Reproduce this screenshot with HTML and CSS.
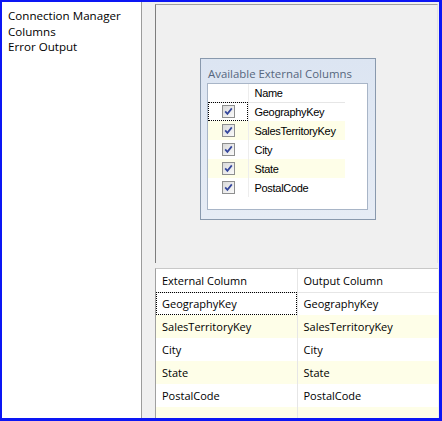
FILE: index.html
```html
<!DOCTYPE html>
<html lang="en">
<head>
    <meta charset="UTF-8">
    <title>Source Editor - Columns</title>
    <link rel="stylesheet" href="styles.css">
</head>
<body>
    <div class="window">
        <!-- Page list on the left -->
        <ul class="nav">
            <li>Connection Manager</li>
            <li>Columns</li>
            <li>Error Output</li>
        </ul>

        <div class="main">
            <!-- Designer area with the column picker -->
            <div class="designer">
                <div class="columns-box">
                    <div class="box-title">Available External Columns</div>
                    <div class="list">
                        <table class="col-table">
                            <tr class="head"><th class="chk"></th><th>Name</th></tr>
                            <tr><td class="chk focus"><svg class="cb" viewBox="0 0 13 13"><rect x="0.5" y="0.5" width="12" height="12" fill="url(#cbfill)" stroke="#8e8f8f"/><defs><linearGradient id="cbfill" x1="0" y1="0" x2="1" y2="1"><stop offset="0" stop-color="#d8d8d8"/><stop offset="1" stop-color="#fbfbfb"/></linearGradient></defs><path d="M3.2 6.4 L5.4 8.9 L9.8 3.4" fill="none" stroke="#34469c" stroke-width="1.7"/></svg></td><td>GeographyKey</td></tr>
                            <tr class="alt"><td class="chk"><svg class="cb" viewBox="0 0 13 13"><rect x="0.5" y="0.5" width="12" height="12" fill="url(#cbfill)" stroke="#8e8f8f"/><path d="M3.2 6.4 L5.4 8.9 L9.8 3.4" fill="none" stroke="#34469c" stroke-width="1.7"/></svg></td><td>SalesTerritoryKey</td></tr>
                            <tr><td class="chk"><svg class="cb" viewBox="0 0 13 13"><rect x="0.5" y="0.5" width="12" height="12" fill="url(#cbfill)" stroke="#8e8f8f"/><path d="M3.2 6.4 L5.4 8.9 L9.8 3.4" fill="none" stroke="#34469c" stroke-width="1.7"/></svg></td><td>City</td></tr>
                            <tr class="alt"><td class="chk"><svg class="cb" viewBox="0 0 13 13"><rect x="0.5" y="0.5" width="12" height="12" fill="url(#cbfill)" stroke="#8e8f8f"/><path d="M3.2 6.4 L5.4 8.9 L9.8 3.4" fill="none" stroke="#34469c" stroke-width="1.7"/></svg></td><td>State</td></tr>
                            <tr><td class="chk"><svg class="cb" viewBox="0 0 13 13"><rect x="0.5" y="0.5" width="12" height="12" fill="url(#cbfill)" stroke="#8e8f8f"/><path d="M3.2 6.4 L5.4 8.9 L9.8 3.4" fill="none" stroke="#34469c" stroke-width="1.7"/></svg></td><td>PostalCode</td></tr>
                        </table>
                    </div>
                </div>
            </div>

            <!-- Column mapping grid -->
            <div class="mapping">
                <table class="map-table">
                    <tr class="head"><th>External Column</th><th>Output Column</th></tr>
                    <tr><td class="focus">GeographyKey</td><td>GeographyKey</td></tr>
                    <tr class="alt"><td>SalesTerritoryKey</td><td>SalesTerritoryKey</td></tr>
                    <tr><td>City</td><td>City</td></tr>
                    <tr class="alt"><td>State</td><td>State</td></tr>
                    <tr><td>PostalCode</td><td>PostalCode</td></tr>
                    <tr class="alt"><td></td><td></td></tr>
                </table>
            </div>
        </div>
    </div>
</body>
</html>
```

FILE: styles.css
```css
* {
    box-sizing: border-box;
}

body {
    margin: 0;
    font-family: "Open Sans", "Noto Sans", sans-serif;
    font-size: 11px;
    color: #000;
}

/* Outer window with the blue frame */
.window {
    width: 442px;
    height: 421px;
    border: solid #0c16f4;
    border-width: 2px 3px 3px 2px;
    background: #f0f0f0;
    display: flex;
    overflow: hidden;
}

/* Left page list */
.nav {
    width: 140px;
    margin: 0;
    padding: 6px 0 0 6px;
    list-style: none;
    background: #fff;
    border-right: 1px solid #9c9c9c;
    font-size: 11.6px;
    line-height: 15.5px;
}

.main {
    flex: 1;
    margin-left: 13px;
    padding-top: 2px;
    padding-right: 1px;
    display: flex;
    flex-direction: column;
    min-width: 0;
}

/* Upper designer pane */
.designer {
    height: 259px;
    border-top: 1px solid #a0a0a0;
    border-left: 1px solid #7d7d7d;
    border-right: 1px solid #e2e2e2;
    padding: 53px 0 0 44px;
    background: #f0f0f0;
}

.columns-box {
    width: 176px;
    height: 162px;
    border: 1px solid #8999ad;
    background: linear-gradient(#dce5f2, #e6ecf5);
    padding: 0 0 0 6px;
}

.box-title {
    height: 24px;
    padding: 7px 0 0 1px;
    line-height: 15px;
    color: #56667d;
    font-size: 11.4px;
}

.list {
    width: 161px;
    height: 127px;
    background: #fff;
    border: 1px solid #a8b5c7;
}

.col-table {
    border-collapse: collapse;
    width: 137px;
    font-family: "Liberation Sans", Arial, sans-serif;
    font-size: 11px;
    letter-spacing: -0.3px;
}

.col-table th,
.col-table td {
    padding: 0 0 0 6px;
    text-align: left;
    font-weight: normal;
}

.col-table .head th {
    height: 18px;
    border-bottom: 1px solid #e6e6e6;
}

.col-table td {
    height: 19px;
}

.col-table .chk {
    width: 40px;
    padding: 0;
    text-align: center;
    border-right: 1px solid #ededed;
}

.col-table .alt td {
    background: #fefee8;
}

.cb {
    width: 13px;
    height: 13px;
    display: block;
    margin: 0 auto;
    position: relative;
    left: 1px;
}

.focus {
    outline: 1px dotted #000;
    outline-offset: -1px;
}

/* Bottom mapping grid */
.mapping {
    flex: 1;
    margin-top: 5px;
    background: #fff;
    border-top: 1px solid #c8c8c8;
    border-left: 1px solid #a0a0a0;
    overflow: hidden;
}

.map-table {
    border-collapse: collapse;
    width: 100%;
    table-layout: fixed;
}

.map-table th,
.map-table td {
    height: 23px;
    padding: 0 0 0 6px;
    text-align: left;
    font-weight: normal;
    white-space: nowrap;
}

.map-table th:first-child,
.map-table td:first-child {
    width: 141px;
    border-right: 1px solid #e6e6e6;
}

.map-table .head th {
    border-bottom: 1px solid #e6e6e6;
}

.map-table .alt td {
    background: #fefee8;
}
```
